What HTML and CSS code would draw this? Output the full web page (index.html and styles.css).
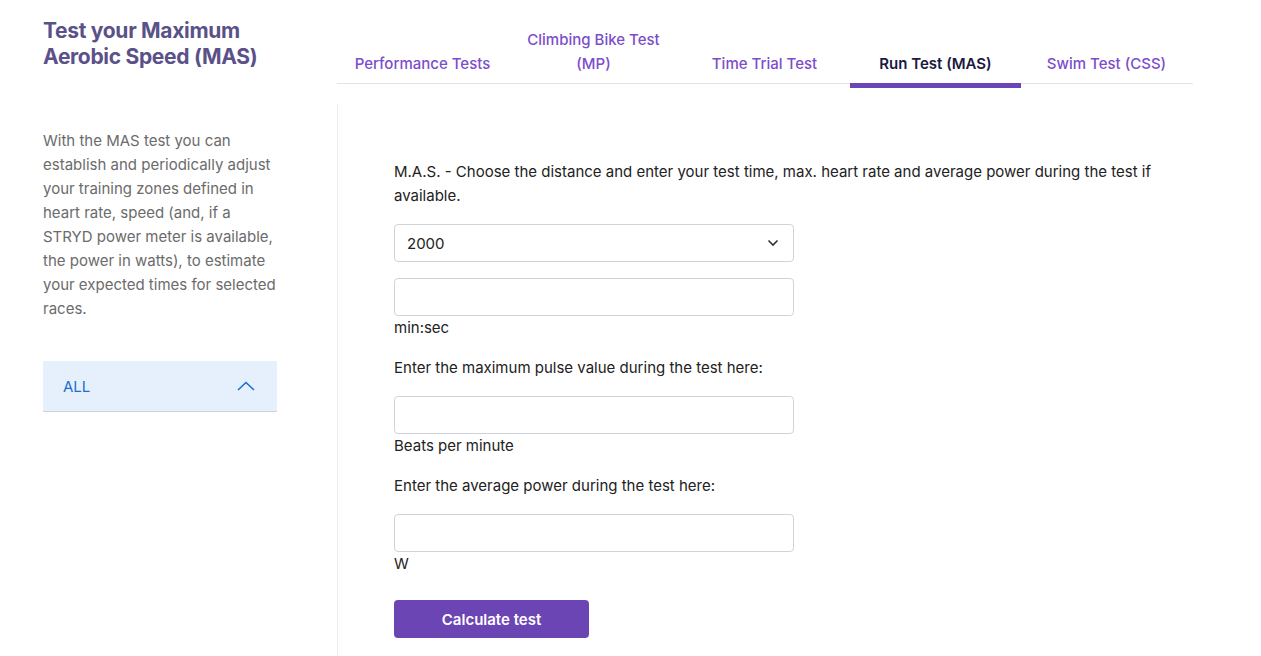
FILE: index.html
```html
<!DOCTYPE html>
<html lang="en">
<head>
<meta charset="utf-8">
<title>Test your Maximum Aerobic Speed (MAS)</title>
<link rel="stylesheet" href="styles.css">
</head>
<body>
<div class="page">
  <header class="top">
    <h1 class="title">Test your Maximum Aerobic Speed (MAS)</h1>
    <nav class="tabs">
      <a class="tab">Performance Tests</a>
      <a class="tab">Climbing Bike Test (MP)</a>
      <a class="tab">Time Trial Test</a>
      <a class="tab active">Run Test (MAS)</a>
      <a class="tab">Swim Test (CSS)</a>
    </nav>
  </header>
  <div class="body">
    <aside class="side">
      <p class="intro">With the MAS test you can establish and periodically adjust your training zones defined in heart rate, speed (and, if a STRYD power meter is available, the power in watts), to estimate your expected times for selected races.</p>
      <div class="accordion">
        <span>ALL</span>
        <svg class="chev-up" width="18" height="10" viewBox="0 0 18 10"><path d="M1 9 L9 1.5 L17 9" fill="none" stroke="#1b6fcf" stroke-width="1.6"/></svg>
      </div>
    </aside>
    <main class="main">
      <p class="text">M.A.S. - Choose the distance and enter your test time, max. heart rate and average power during the test if available.</p>
      <div class="field select">
        <span>2000</span>
        <svg width="12" height="8" viewBox="0 0 12 8"><path d="M1.5 1.5 L6 6 L10.5 1.5" fill="none" stroke="#333" stroke-width="1.6"/></svg>
      </div>
      <div class="group">
        <div class="field"></div>
        <div class="unit">min:sec</div>
      </div>
      <p class="text">Enter the maximum pulse value during the test here:</p>
      <div class="group">
        <div class="field"></div>
        <div class="unit">Beats per minute</div>
      </div>
      <p class="text">Enter the average power during the test here:</p>
      <div class="group">
        <div class="field"></div>
        <div class="unit">W</div>
      </div>
      <button class="btn">Calculate test</button>
    </main>
  </div>
</div>
</body>
</html>
```
FILE: styles.css
```css
* { box-sizing: border-box; }
html, body { margin: 0; padding: 0; background: #fff; }
body {
  font-family: "Inter", "Noto Sans", sans-serif;
  font-size: 15px;
  color: #222;
}
.page { padding-left: 43px; }
.top {
  display: grid;
  grid-template-columns: 294px 856px;
  align-items: end;
}
.title {
  margin: 0;
  align-self: start;
  margin-top: 18px;
  width: 240px;
  font-size: 21px;
  line-height: 26px;
  font-weight: 700;
  letter-spacing: -0.3px;
  color: #5b5189;
}
.tabs {
  display: flex;
  border-bottom: 1px solid #e3e3e3;
  height: 84px;
  align-items: stretch;
}
.tab {
  flex: 0 0 171px;
  display: flex;
  align-items: flex-end;
  justify-content: center;
  text-align: center;
  padding: 0 10px 7px;
  line-height: 24px;
  font-weight: 500;
  color: #7c4dcc;
  margin-bottom: -5px;
  border-bottom: 5px solid transparent;
}
.tab.active {
  color: #1a1a40;
  font-weight: 600;
  border-bottom-color: #6a45b8;
}
.body {
  display: grid;
  grid-template-columns: 294px 856px;
  margin-top: 20px;
}
.side { width: 234px; padding-top: 25px; }
.intro {
  margin: 0;
  color: #6b6b6b;
  line-height: 24px;
}
.accordion {
  margin-top: 40px;
  height: 51px;
  background: #e5f0fc;
  border-bottom: 1px solid #c9d4df;
  display: flex;
  align-items: center;
  justify-content: space-between;
  padding: 0 22px 0 20px;
  color: #1b6fcf;
}
.main {
  border-left: 1px solid #ececec;
  padding: 56px 30px 20px 56px;
  min-height: 560px;
  display: flex;
  flex-direction: column;
  align-items: flex-start;
}
.text {
  margin: 0 0 16px;
  line-height: 24px;
  color: #222;
}
.field {
  width: 400px;
  height: 38px;
  border: 1px solid #cfd4da;
  border-radius: 4px;
  background: #fff;
}
.select {
  display: flex;
  align-items: center;
  justify-content: space-between;
  padding: 0 14px 0 12px;
  margin-bottom: 16px;
  color: #222;
}
.group { margin-bottom: 16px; }
.unit { line-height: 24px; color: #222; }
.btn {
  margin-top: 8px;
  width: 195px;
  height: 38px;
  border: 0;
  border-radius: 4px;
  background: #6c45b5;
  color: #fff;
  font-family: inherit;
  font-size: 15px;
  font-weight: 600;
}
```
